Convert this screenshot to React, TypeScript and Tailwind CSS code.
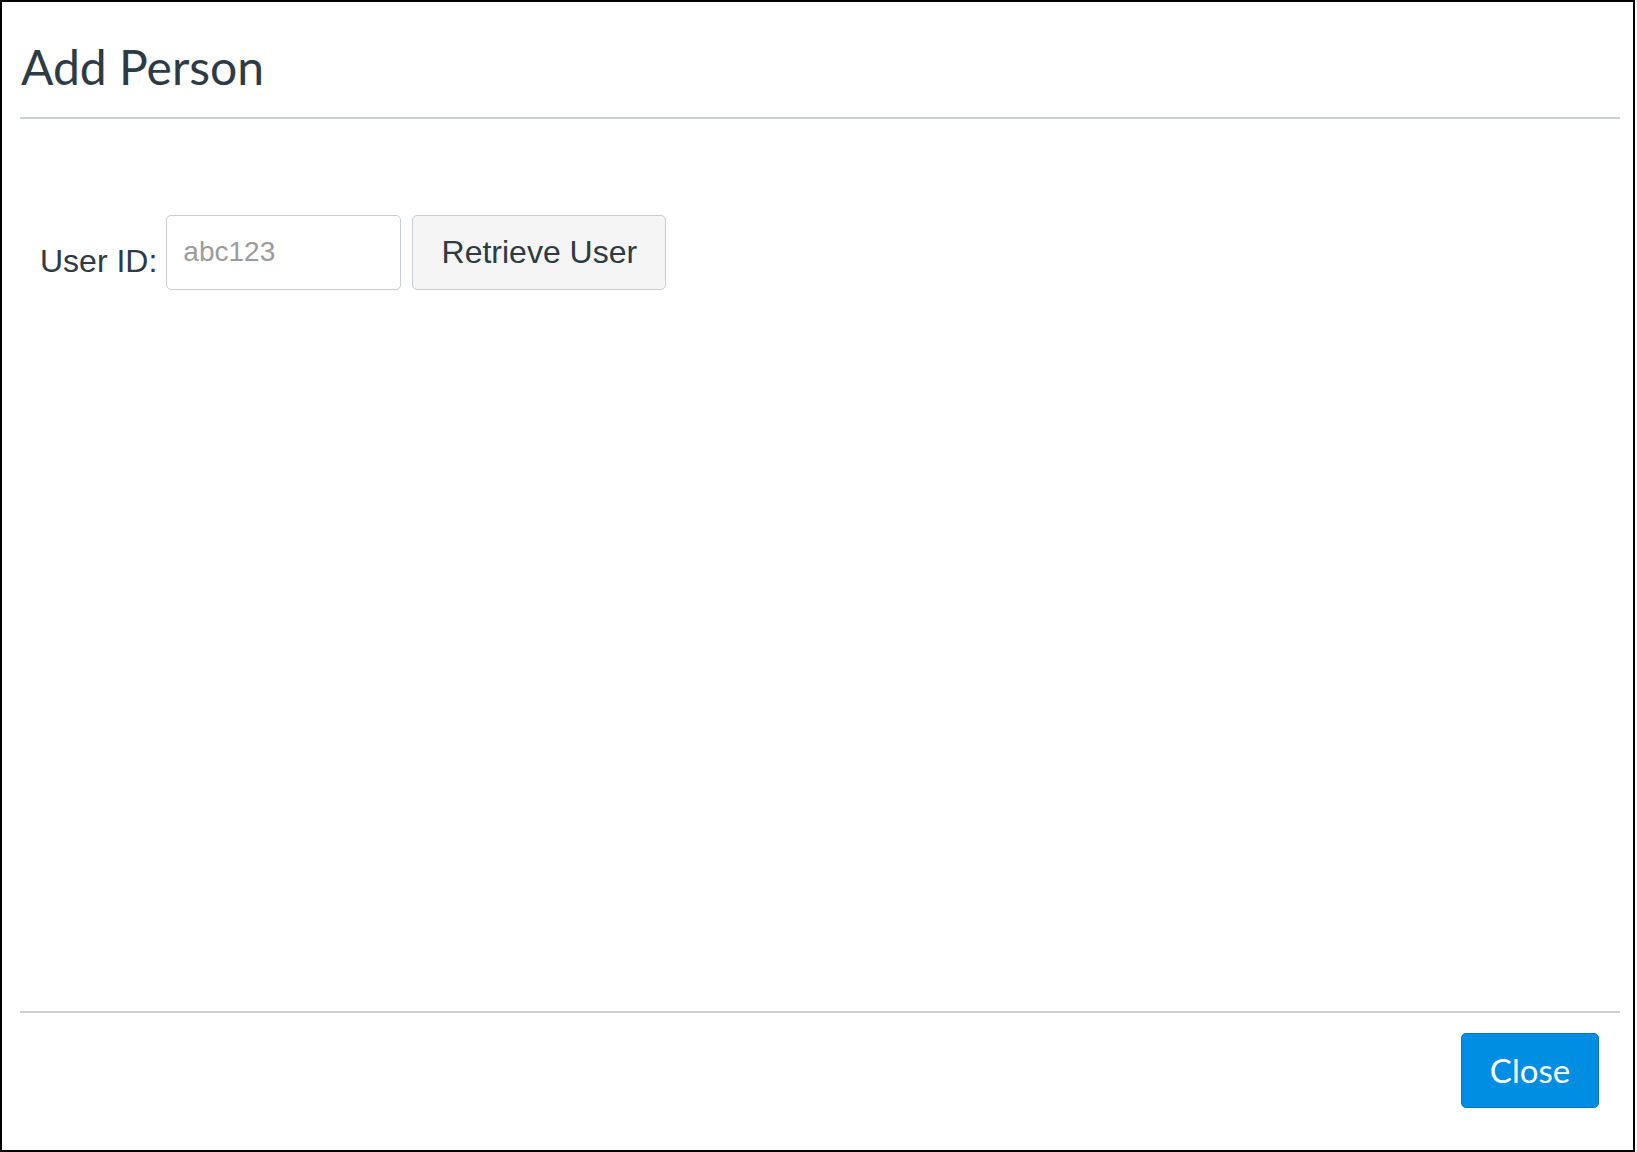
import React from "react";

export default function App() {
  return (
    <div className="w-[1637px] h-[1152px] bg-white">
      <div className="w-[1635px] h-[1152px] border-2 border-black flex flex-col bg-white">
        <div className="pl-[18px] pr-[13px] pt-[36px]">
          <h1 className="ml-[1px] text-[48px] leading-[1.2] text-[#2d3b45] font-normal [font-family:Lato,'Noto_Sans',sans-serif]">
            Add Person
          </h1>
          <div className="mt-[21px] h-[2px] bg-[#cdd2d6]" />
        </div>

        <div className="flex-1 pt-[96px] pl-[38px]">
          <div className="flex items-start [font-family:'Liberation_Sans',Arial,sans-serif]">
            <label className="mt-[28px] text-[32px] leading-[36px] text-[#2d3b45]">User ID:</label>
            <input
              type="text"
              placeholder="abc123"
              className="ml-[9px] w-[235px] h-[75px] border border-[#c7cdd1] rounded-[5px] pl-[16px] text-[28px] text-[#2d3b45] placeholder:text-[#9b9b9b] bg-white outline-none [font-family:'Liberation_Sans',Arial,sans-serif]"
            />
            <button className="ml-[11px] w-[254px] h-[75px] border border-[#c7cdd1] rounded-[5px] bg-[#f5f5f5] text-[32px] text-[#2d3b45] [font-family:'Liberation_Sans',Arial,sans-serif]">
              Retrieve User
            </button>
          </div>
        </div>

        <div className="pl-[18px] pr-[13px]">
          <div className="h-[2px] bg-[#cdd2d6]" />
          <div className="flex justify-end pr-[21px] pt-[20px] pb-[42px]">
            <button className="w-[138px] h-[75px] rounded-[5px] bg-[#008ee2] border border-[#0079c1] text-white text-[33px] [font-family:Lato,'Noto_Sans',sans-serif]">
              Close
            </button>
          </div>
        </div>
      </div>
    </div>
  );
}
